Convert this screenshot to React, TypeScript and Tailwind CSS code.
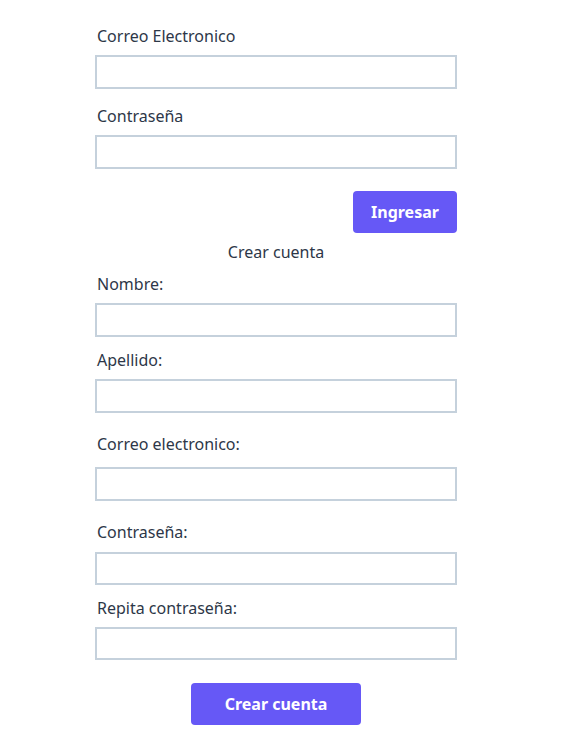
import React from "react";

const font = { fontFamily: '"Noto Sans", "Open Sans", sans-serif' };

export default function App() {
  return (
    <div className="w-[584px] h-[748px] bg-white" style={font}>
      <div className="ml-[95px] w-[362px] pt-[26px] flex flex-col">
        <div className="flex flex-col">
          <label className="text-[16px] leading-[20px] text-[#2d3748] pl-[2px]">Correo Electronico</label>
          <input className="mt-[9px] h-[34px] w-[362px] border-2 border-[#c5d1dc] bg-white outline-none" />
        </div>
        <div className="flex flex-col mt-[17px]">
          <label className="text-[16px] leading-[20px] text-[#2d3748] pl-[2px]">Contraseña</label>
          <input className="mt-[9px] h-[34px] w-[362px] border-2 border-[#c5d1dc] bg-white outline-none" />
        </div>
        <div className="flex justify-end mt-[22px]">
          <button className="w-[104px] h-[42px] rounded-[4px] bg-[#6658f6] text-white font-bold text-[16px]">Ingresar</button>
        </div>
        <div className="text-center mt-[9px] text-[16px] leading-[20px] text-[#2d3748]">Crear cuenta</div>
        <div className="flex flex-col mt-[12px]">
          <label className="text-[16px] leading-[20px] text-[#2d3748] pl-[2px]">Nombre:</label>
          <input className="mt-[9px] h-[34px] w-[362px] border-2 border-[#c5d1dc] bg-white outline-none" />
        </div>
        <div className="flex flex-col mt-[13px]">
          <label className="text-[16px] leading-[20px] text-[#2d3748] pl-[2px]">Apellido:</label>
          <input className="mt-[9px] h-[34px] w-[362px] border-2 border-[#c5d1dc] bg-white outline-none" />
        </div>
        <div className="flex flex-col mt-[21px]">
          <label className="text-[16px] leading-[20px] text-[#2d3748] pl-[2px]">Correo electronico:</label>
          <input className="mt-[13px] h-[34px] w-[362px] border-2 border-[#c5d1dc] bg-white outline-none" />
        </div>
        <div className="flex flex-col mt-[21px]">
          <label className="text-[16px] leading-[20px] text-[#2d3748] pl-[2px]">Contraseña:</label>
          <input className="mt-[10px] h-[33px] w-[362px] border-2 border-[#c5d1dc] bg-white outline-none" />
        </div>
        <div className="flex flex-col mt-[13px]">
          <label className="text-[16px] leading-[20px] text-[#2d3748] pl-[2px]">Repita contraseña:</label>
          <input className="mt-[9px] h-[33px] w-[362px] border-2 border-[#c5d1dc] bg-white outline-none" />
        </div>
        <div className="flex justify-center mt-[23px]">
          <button className="w-[170px] h-[42px] rounded-[4px] bg-[#6658f6] text-white font-bold text-[16px]">Crear cuenta</button>
        </div>
      </div>
    </div>
  );
}
